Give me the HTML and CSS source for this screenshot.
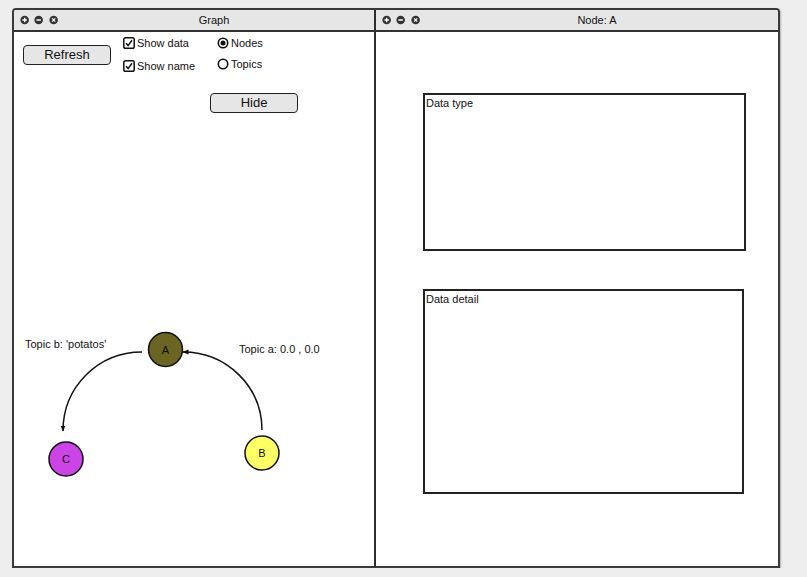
FILE: index.html
```html
<!DOCTYPE html>
<html>
<head>
<meta charset="utf-8">
<title>Graph</title>
<link rel="stylesheet" href="styles.css">
</head>
<body>
<div class="window">
  <section class="panel panel-left">
    <header class="titlebar">
      <div class="win-icons">
        <svg class="wicon" viewBox="0 0 10 10"><circle cx="5" cy="5" r="4.6" fill="#333"/><path d="M5 2.6V7.4M2.6 5H7.4" stroke="#fff" stroke-width="1.4"/></svg>
        <svg class="wicon" viewBox="0 0 10 10"><circle cx="5" cy="5" r="4.6" fill="#333"/><path d="M2.6 5H7.4" stroke="#fff" stroke-width="1.6"/></svg>
        <svg class="wicon" viewBox="0 0 10 10"><circle cx="5" cy="5" r="4.6" fill="#333"/><path d="M3.3 3.3L6.7 6.7M6.7 3.3L3.3 6.7" stroke="#fff" stroke-width="1.3"/></svg>
      </div>
      <div class="title">Graph</div>
    </header>
    <div class="panel-body">
      <div class="controls">
        <button class="btn btn-refresh">Refresh</button>
        <div class="checks">
          <label class="opt">
            <svg class="box" viewBox="0 0 12 12"><rect x="0.8" y="0.8" width="10.4" height="10.4" rx="1.8" fill="#fff" stroke="#111" stroke-width="1.5"/><path d="M3 6.2L5.1 8.6L9 3.2" fill="none" stroke="#111" stroke-width="1.5"/></svg>
            <span>Show data</span>
          </label>
          <label class="opt">
            <svg class="box" viewBox="0 0 12 12"><rect x="0.8" y="0.8" width="10.4" height="10.4" rx="1.8" fill="#fff" stroke="#111" stroke-width="1.5"/><path d="M3 6.2L5.1 8.6L9 3.2" fill="none" stroke="#111" stroke-width="1.5"/></svg>
            <span>Show name</span>
          </label>
        </div>
        <div class="radios">
          <label class="opt">
            <svg class="box" viewBox="0 0 12 12"><circle cx="6" cy="6" r="4.7" fill="#fff" stroke="#111" stroke-width="1.6"/><circle cx="6" cy="6" r="2.5" fill="#111"/></svg>
            <span>Nodes</span>
          </label>
          <label class="opt">
            <svg class="box" viewBox="0 0 12 12"><circle cx="6" cy="6" r="4.7" fill="#fff" stroke="#111" stroke-width="1.6"/></svg>
            <span>Topics</span>
          </label>
        </div>
      </div>
      <div class="hide-row">
        <button class="btn btn-hide">Hide</button>
      </div>
      <svg class="graph" width="360" height="180" viewBox="0 0 360 180">
        <defs>
          <marker id="arr" viewBox="0 0 6 6" refX="5.5" refY="3" markerWidth="6" markerHeight="6" orient="auto" markerUnits="userSpaceOnUse">
            <path d="M0 0.5L6 3L0 5.5Z" fill="#111"/>
          </marker>
        </defs>
        <path d="M128 32 C 84 32, 49 67, 49 111" fill="none" stroke="#111" stroke-width="1.5" marker-end="url(#arr)"/>
        <path d="M248 110 C 248 67, 213 32, 169 32" fill="none" stroke="#111" stroke-width="1.5" marker-end="url(#arr)"/>
        <text class="elabel" x="11" y="28">Topic b: 'potatos'</text>
        <text class="elabel" x="225" y="33">Topic a: 0.0 , 0.0</text>
        <circle cx="151.5" cy="29.5" r="17" fill="#6b6422" stroke="#111" stroke-width="1.5"/>
        <text class="nlabel" x="151.5" y="33.5">A</text>
        <circle cx="52" cy="139" r="17" fill="#cc44e6" stroke="#111" stroke-width="1.5"/>
        <text class="nlabel" x="52" y="143">C</text>
        <circle cx="248" cy="133" r="17" fill="#ffff66" stroke="#111" stroke-width="1.5"/>
        <text class="nlabel" x="248" y="137">B</text>
      </svg>
    </div>
  </section>
  <section class="panel panel-right">
    <header class="titlebar">
      <div class="win-icons">
        <svg class="wicon" viewBox="0 0 10 10"><circle cx="5" cy="5" r="4.6" fill="#333"/><path d="M5 2.6V7.4M2.6 5H7.4" stroke="#fff" stroke-width="1.4"/></svg>
        <svg class="wicon" viewBox="0 0 10 10"><circle cx="5" cy="5" r="4.6" fill="#333"/><path d="M2.6 5H7.4" stroke="#fff" stroke-width="1.6"/></svg>
        <svg class="wicon" viewBox="0 0 10 10"><circle cx="5" cy="5" r="4.6" fill="#333"/><path d="M3.3 3.3L6.7 6.7M6.7 3.3L3.3 6.7" stroke="#fff" stroke-width="1.3"/></svg>
      </div>
      <div class="title">Node: A</div>
    </header>
    <div class="panel-body">
      <div class="data-box data-type">Data type</div>
      <div class="data-box data-detail">Data detail</div>
    </div>
  </section>
</div>
</body>
</html>
```
FILE: styles.css
```css
html, body {
  margin: 0;
  padding: 0;
}
body {
  background: #eeeeee;
  font-family: "Liberation Sans", Arial, sans-serif;
  font-size: 11px;
  color: #111;
}
.window {
  box-sizing: border-box;
  margin: 8px 0 0 12px;
  width: 768px;
  height: 560px;
  border: 2px solid #3a3a3a;
  border-radius: 4px 4px 0 0;
  background: #fff;
  display: flex;
  box-shadow: 1px 1px 2px rgba(0, 0, 0, 0.25);
}
.panel {
  display: flex;
  flex-direction: column;
}
.panel-left {
  width: 360px;
  border-right: 2px solid #2e2e2e;
}
.panel-right {
  flex: 1;
}
.titlebar {
  height: 20px;
  background: #e6e6e6;
  border-bottom: 2px solid #333;
  display: flex;
  align-items: center;
}
.panel-left .titlebar {
  border-top-left-radius: 2px;
}
.panel-right .titlebar {
  border-top-right-radius: 2px;
}
.win-icons {
  display: flex;
  gap: 5px;
  padding-left: 6px;
  width: 38px;
}
.wicon {
  width: 10px;
  height: 10px;
  display: block;
}
.title {
  flex: 1;
  text-align: center;
  font-size: 11px;
  color: #111;
  padding-right: 4px;
}
.controls {
  display: flex;
  height: 61px;
}
.btn {
  box-sizing: border-box;
  font-family: "Liberation Sans", Arial, sans-serif;
  font-size: 13px;
  color: #111;
  background: #e6e6e6;
  border: 1.5px solid #222;
  border-radius: 4px;
  padding: 0;
  line-height: 16px;
}
.btn-refresh {
  margin: 13px 0 0 9px;
  width: 88px;
  height: 20px;
  align-self: flex-start;
}
.checks {
  margin: 5px 0 0 12px;
  width: 94px;
  display: flex;
  flex-direction: column;
  gap: 11px;
}
.radios {
  margin-top: 5px;
  display: flex;
  flex-direction: column;
  gap: 9px;
}
.opt {
  display: flex;
  align-items: center;
  height: 12px;
  gap: 2px;
  font-size: 11px;
}
.box {
  width: 12px;
  height: 12px;
  display: block;
  flex: none;
}
.hide-row {
  padding-left: 196px;
}
.btn-hide {
  width: 88px;
  height: 20px;
  display: block;
}
.graph {
  display: block;
  margin-top: 207px;
}
.elabel {
  font-family: "Liberation Sans", Arial, sans-serif;
  font-size: 11px;
  fill: #111;
}
.nlabel {
  font-family: "Liberation Sans", Arial, sans-serif;
  font-size: 11px;
  fill: #111;
  text-anchor: middle;
}
.data-box {
  box-sizing: border-box;
  margin-left: 47px;
  border: 2px solid #222;
  padding: 2px 1px;
  font-size: 11px;
  line-height: 13px;
}
.data-type {
  margin-top: 61px;
  width: 323px;
  height: 158px;
}
.data-detail {
  margin-top: 38px;
  width: 321px;
  height: 205px;
}
```
